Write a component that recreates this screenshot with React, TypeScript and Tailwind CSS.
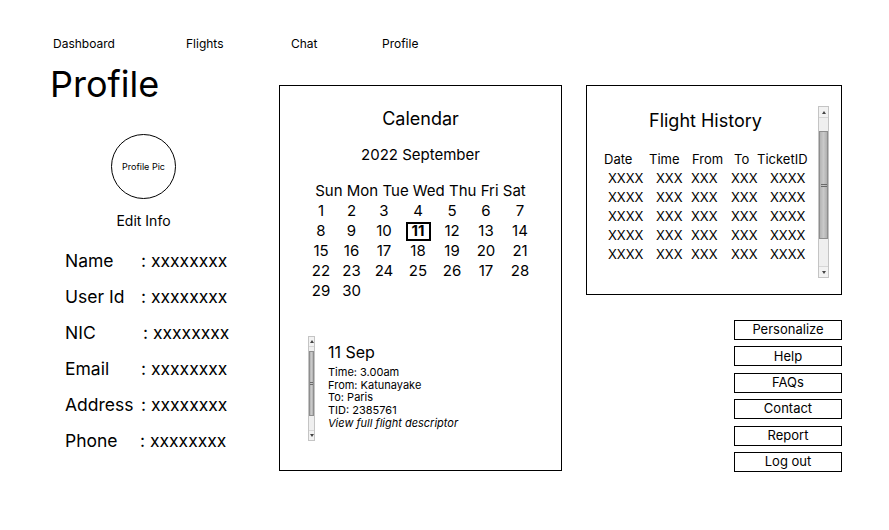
import React from "react";

type SbProps = {
  w: string;
  top: string;
  t1: string;
  thumb: string;
  t2: string;
  bot: string;
  grip: string;
};

function Scrollbar({ w, top, t1, thumb, t2, bot, grip }: SbProps) {
  return (
    <div className={`${w} flex flex-col border border-[#c4c4c4] bg-[#ececec] shrink-0`}>
      <div className={`${top} flex items-center justify-center bg-[#f2f2f2] border-b border-[#d6d6d6]`}>
        <div className="w-0 h-0 border-l-[2.5px] border-r-[2.5px] border-b-[3px] border-l-transparent border-r-transparent border-b-[#444]" />
      </div>
      <div className={`${t1} bg-[#efefef]`} />
      <div className={`${thumb} flex items-center justify-center bg-gradient-to-r from-[#b4b4b4] via-[#c9c9c9] to-[#b0b0b0] border border-[#8e8e8e]`}>
        <div className={`${grip} flex flex-col gap-[1px]`}>
          <div className="h-[1px] bg-[#6a6a6a]" />
          <div className="h-[1px] bg-[#6a6a6a]" />
        </div>
      </div>
      <div className={`${t2} bg-[#efefef]`} />
      <div className={`${bot} flex items-center justify-center bg-[#f2f2f2] border-t border-[#d6d6d6]`}>
        <div className="w-0 h-0 border-l-[2.5px] border-r-[2.5px] border-t-[3px] border-l-transparent border-r-transparent border-t-[#444]" />
      </div>
    </div>
  );
}

const info: [string, string][] = [
  ["Name", ""],
  ["User Id", ""],
  ["NIC", "ml-[2px]"],
  ["Email", ""],
  ["Address", ""],
  ["Phone", "-ml-[1px]"],
];

const weeks: string[][] = [
  ["1", "2", "3", "4", "5", "6", "7"],
  ["8", "9", "10", "11", "12", "13", "14"],
  ["15", "16", "17", "18", "19", "20", "21"],
  ["22", "23", "24", "25", "26", "17", "28"],
  ["29", "30", "", "", "", "", ""],
];

const buttons = ["Personalize", "Help", "FAQs", "Contact", "Report", "Log out"];

export default function App() {
  return (
    <div className="w-[889px] h-[530px] bg-white text-black overflow-hidden font-[Inter,sans-serif]">
      {/* Nav */}
      <div className="flex pt-[36px] pl-[53px] text-[12px] leading-[16px]">
        <div className="w-[133px]">Dashboard</div>
        <div className="w-[105px]">Flights</div>
        <div className="w-[91px]">Chat</div>
        <div>Profile</div>
      </div>

      <div className="flex items-start pl-[50px] mt-[10px]">
        {/* Left column */}
        <div className="w-[229px] flex flex-col">
          <div className="text-[36px] leading-[44px]">Profile</div>
          <div className="ml-[61px] mt-[28px] w-[65px] h-[65px] rounded-full border border-black flex items-center justify-center text-[9px]">
            Profile Pic
          </div>
          <div className="mt-[12px] w-[187px] text-center text-[14px] leading-[20px]">Edit Info</div>
          <div className="mt-[12px] pl-[15px] flex flex-col">
            {info.map(([label, adj]) => (
              <div key={label} className="flex h-[36px] items-center text-[17.5px]">
                <div className="w-[76px]">{label}</div>
                <div className={adj}>: xxxxxxxx</div>
              </div>
            ))}
          </div>
        </div>

        {/* Calendar */}
        <div className="mt-[23px] w-[283px] h-[386px] border border-black flex flex-col">
          <div className="pt-[21px] text-center text-[18px] leading-[24px]">Calendar</div>
          <div className="mt-[14px] text-center text-[15px] leading-[20px]">2022 September</div>
          <div className="mt-[16px] text-center text-[15px] leading-[20px]">Sun Mon Tue Wed Thu Fri Sat</div>
          <div className="ml-[26px] grid grid-cols-[30px_31px_34px_34px_34px_34px_34px] text-[15px] leading-[20px]">
            {weeks.flat().map((d, i) => (
              <div key={i} className="flex items-center justify-center h-[20px]">
                {d === "11" ? (
                  <span className="border-2 border-black font-bold h-[19px] w-[25px] flex items-center justify-center leading-[14px]">
                    11
                  </span>
                ) : (
                  d
                )}
              </div>
            ))}
          </div>
          <div className="mt-[35px] ml-[28px] flex">
            <Scrollbar
              w="w-[7px]"
              top="h-[10px]"
              t1="h-[4px]"
              thumb="h-[65px]"
              t2="h-[14px]"
              bot="h-[10px]"
              grip="w-[3px]"
            />
            <div className="ml-[13px] pt-[6px]">
              <div className="text-[16px] leading-[20px]">11 Sep</div>
              <div className="mt-[4px] text-[11px] leading-[12.7px]">
                <div>Time: 3.00am</div>
                <div>From: Katunayake</div>
                <div>To: Paris</div>
                <div>TID: 2385761</div>
                <div className="italic">View full flight descriptor</div>
              </div>
            </div>
          </div>
        </div>

        {/* Right column */}
        <div className="ml-[24px] mt-[23px] w-[256px] flex flex-col items-end">
          <div className="w-[256px] h-[210px] border border-black flex">
            <div className="flex-1 flex flex-col">
              <div className="pt-[23px] pl-[62px] text-[18px] leading-[24px]">Flight History</div>
              <div className="mt-[17px] pl-[17px] flex text-[13px] leading-[19px]">
                <div className="w-[45px]">Date</div>
                <div className="w-[43px]">Time</div>
                <div className="w-[42px]">From</div>
                <div className="w-[23px]">To</div>
                <div>TicketID</div>
              </div>
              {[0, 1, 2, 3, 4].map((r) => (
                <div key={r} className="pl-[21px] flex text-[13px] leading-[19px]">
                  <div className="w-[48px]">XXXX</div>
                  <div className="w-[35px]">XXX</div>
                  <div className="w-[40px]">XXX</div>
                  <div className="w-[39px]">XXX</div>
                  <div>XXXX</div>
                </div>
              ))}
            </div>
            <div className="mt-[20px] mr-[12px]">
              <Scrollbar
                w="w-[11px]"
                top="h-[11px]"
                t1="h-[13px]"
                thumb="h-[108px]"
                t2="h-[27px]"
                bot="h-[11px]"
                grip="w-[6px]"
              />
            </div>
          </div>
          <div className="mt-[25px] flex flex-col gap-[6.4px]">
            {buttons.map((b) => (
              <div
                key={b}
                className="w-[108px] h-[20px] border border-black flex items-center justify-center text-[13px]"
              >
                {b}
              </div>
            ))}
          </div>
        </div>
      </div>
    </div>
  );
}
